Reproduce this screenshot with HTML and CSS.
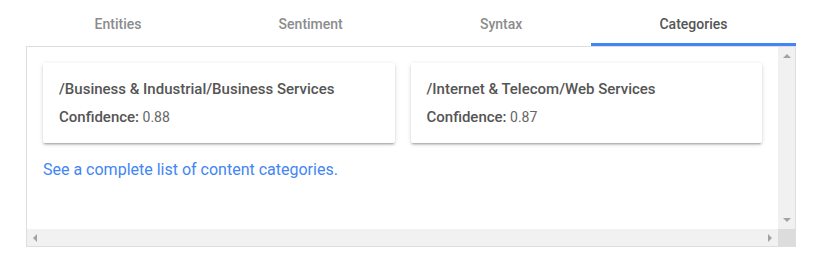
FILE: index.html
```html
<!DOCTYPE html>
<html lang="en">
<head>
<meta charset="utf-8">
<title>Categories</title>
<link rel="stylesheet" href="styles.css">
</head>
<body>
<div class="widget">
  <div class="tabs">
    <div class="tab">Entities</div>
    <div class="tab">Sentiment</div>
    <div class="tab">Syntax</div>
    <div class="tab active">Categories</div>
  </div>
  <div class="panel">
    <div class="content">
      <div class="cards">
        <div class="card">
          <div class="card-title">/Business &amp; Industrial/Business Services</div>
          <div class="card-line"><b>Confidence:</b> 0.88</div>
        </div>
        <div class="card">
          <div class="card-title">/Internet &amp; Telecom/Web Services</div>
          <div class="card-line"><b>Confidence:</b> 0.87</div>
        </div>
      </div>
      <a class="link" href="#">See a complete list of content categories.</a>
    </div>
    <div class="vscroll">
      <svg class="arrow" width="8" height="4" viewBox="0 0 8 4"><polygon points="0,4 8,4 4,0" fill="#a3a3a3"/></svg>
      <svg class="arrow" width="8" height="4" viewBox="0 0 8 4"><polygon points="0,0 8,0 4,4" fill="#a3a3a3"/></svg>
    </div>
    <div class="hscroll">
      <svg class="arrow" width="4" height="8" viewBox="0 0 4 8"><polygon points="4,0 4,8 0,4" fill="#a3a3a3"/></svg>
      <svg class="arrow" width="4" height="8" viewBox="0 0 4 8"><polygon points="0,0 0,8 4,4" fill="#a3a3a3"/></svg>
    </div>
    <div class="corner"></div>
  </div>
</div>
</body>
</html>
```
FILE: styles.css
```css
html, body {
  margin: 0;
  padding: 0;
  background: #fff;
}

body {
  font-family: Roboto, "Liberation Sans", Arial, sans-serif;
  color: #555;
}

.widget {
  margin-left: 26px;
  width: 770px;
}

.tabs {
  display: flex;
  height: 46px;
}

.tab {
  flex: 1 1 auto;
  display: flex;
  align-items: center;
  justify-content: center;
  font-size: 14px;
  line-height: 20px;
  font-weight: 500;
  color: #8c8c8c;
  box-sizing: border-box;
  padding-top: 1px;
}

.tab.active {
  color: #555;
  border-bottom: 3px solid #4285f4;
  padding-top: 4px;
}

.panel {
  border: 1px solid #dedede;
  height: 201px;
  box-sizing: border-box;
  display: grid;
  grid-template-columns: 1fr 17px;
  grid-template-rows: 1fr 17px;
}

.content {
  padding: 16px;
  overflow: hidden;
}

.cards {
  display: flex;
  gap: 16px;
}

.card {
  flex: 1 1 0;
  background: #fff;
  border-radius: 2px;
  padding: 16px;
  box-shadow: 0 2px 2px 0 rgba(0,0,0,0.14), 0 3px 1px -2px rgba(0,0,0,0.12), 0 1px 5px 0 rgba(0,0,0,0.12);
}

.card-title {
  font-size: 15px;
  line-height: 20px;
  font-weight: 500;
  color: #555;
}

.card-line {
  margin-top: 8px;
  font-size: 14px;
  line-height: 20px;
  color: #666;
}

.card-line b {
  font-size: 15px;
  font-weight: 500;
  color: #555;
}

.link {
  display: block;
  margin-top: 16px;
  font-size: 16px;
  line-height: 22px;
  color: #4285f4;
  text-decoration: none;
}

.vscroll {
  background: #f1f1f1;
  display: flex;
  flex-direction: column;
  justify-content: space-between;
  align-items: center;
  padding: 7px 0 7px;
}

.hscroll {
  background: #f1f1f1;
  display: flex;
  justify-content: space-between;
  align-items: center;
  padding: 0 6px;
}

.arrow {
  display: block;
}

.corner {
  background: #dcdcdc;
}
```
